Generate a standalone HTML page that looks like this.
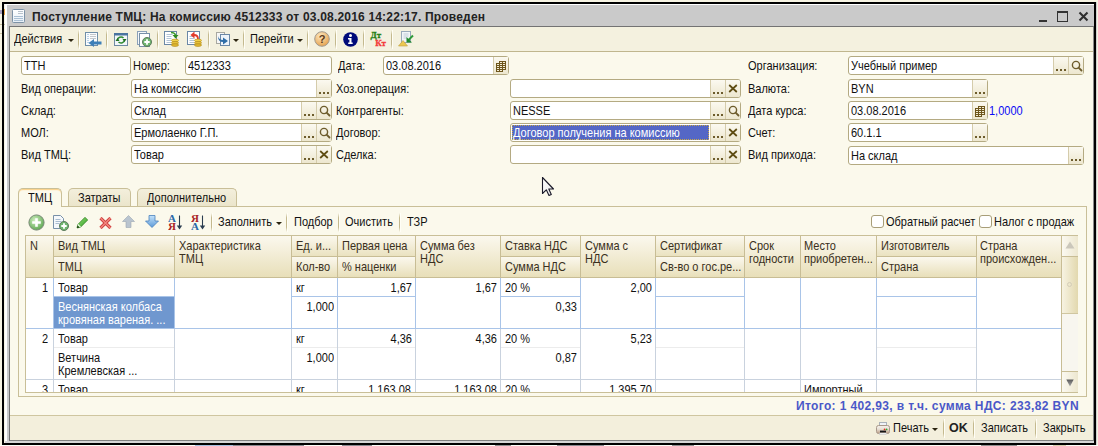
<!DOCTYPE html>
<html><head><meta charset="utf-8">
<style>
*{margin:0;padding:0;box-sizing:border-box}
html,body{width:1098px;height:446px;overflow:hidden;background:#f6f3e2;position:relative;font-family:"Liberation Sans",sans-serif}
.a{position:absolute}
.t{position:absolute;font-size:11px;line-height:13px;white-space:nowrap;color:#111;transform:scaleY(1.125);transform-origin:0 9.5px}
.f{position:absolute;border:1px solid #b4aa82;border-radius:3px;background:#fff}
.bt{position:absolute;top:0;bottom:0;width:15px;border-left:1px solid #d5ccab;background:linear-gradient(#fbf9f0,#ede7cf)}
.bt:last-of-type{border-radius:0 2px 2px 0}
.dots{position:absolute;left:2px;top:12px;width:10px;height:2px;background:linear-gradient(90deg,#6d5c2c 2px,transparent 2px,transparent 4px,#6d5c2c 4px,#6d5c2c 6px,transparent 6px,transparent 8px,#6d5c2c 8px)}
.sep{position:absolute;width:1px;background:linear-gradient(rgba(200,190,150,0),#c4b98e 25%,#c4b98e 75%,rgba(200,190,150,0));box-shadow:1px 0 0 #fffef6}
.hd{position:absolute;background:linear-gradient(#f9f6e8,#ebe3c4)}
.tb{position:absolute;font-size:11px;line-height:13px;white-space:nowrap;color:#222}
.arr{position:absolute;width:0;height:0;border-left:3px solid transparent;border-right:3px solid transparent;border-top:3px solid #2b2410}
</style></head><body>

<div class="a" style="left:5px;top:4px;width:1089px;height:439px;background:#cacaca"></div>
<div class="a" style="left:5px;top:4px;width:1089px;height:1px;background:#fff"></div>
<div class="a" style="left:5px;top:4px;width:2px;height:439px;background:#fff"></div>
<div class="a" style="left:5px;top:441px;width:1089px;height:2px;background:#d6d6d6"></div>
<div class="a" style="left:2px;top:2px;width:1094px;height:443px;border:2px solid #000"></div>
<div class="a" style="left:1096px;top:2px;width:1px;height:443px;background:#d0d0d0"></div>
<div class="a" style="left:0px;top:445px;width:1098px;height:1px;background:#fdfdf8"></div>
<div class="a" style="left:195px;top:445px;width:38px;height:1px;background:#a8c0e0"></div>
<div class="a" style="left:233px;top:445px;width:71px;height:1px;background:#8a8a90"></div>
<div class="a" style="left:342px;top:445px;width:30px;height:1px;background:#8a8a90"></div>
<div class="a" style="left:495px;top:445px;width:16px;height:1px;background:#909090"></div>
<div class="a" style="left:557px;top:445px;width:47px;height:1px;background:#8a8a90"></div>
<div class="a" style="left:672px;top:445px;width:22px;height:1px;background:#909090"></div>
<div class="a" style="left:981px;top:445px;width:36px;height:1px;background:#909090"></div>
<div class="a" style="left:1053px;top:445px;width:13px;height:1px;background:#d8d0b0"></div>
<svg class="a" style="left:12px;top:9px" width="13" height="14" viewBox="0 0 13 14"><defs><linearGradient id="tg" x1="0" y1="0" x2="0" y2="1"><stop offset="0" stop-color="#fff"/><stop offset="1" stop-color="#e6eef6"/></linearGradient></defs><rect x="0.5" y="0.5" width="12" height="13" rx="1" fill="url(#tg)" stroke="#7d92a6"/><path d="M6 2.5h5M6 4.5h5" stroke="#b8c2cc"/><path d="M2 7.5h9M2 9.5h9M2 11.5h9" stroke="#aac0d4"/></svg>
<div class="a" style="left:0px;top:24px;width:2px;height:1px;background:#c8c0a0"></div>
<div class="a" style="left:4px;top:24px;width:1px;height:1px;background:#c8c0a0"></div>
<div class="a" style="left:0px;top:33px;width:2px;height:1px;background:#d0c8a8"></div>
<svg class="a" style="left:0px;top:8px" width="6" height="8" viewBox="0 0 6 8"><path d="M0 3h2M0 5h2" stroke="#6050a0" stroke-width="1"/><path d="M4.5 1v6" stroke="#e8a040" stroke-width="1"/></svg>
<div class="t" style="left:32px;top:10px;font-weight:bold;font-size:12px;letter-spacing:0.19px;line-height:15px;color:#222;transform:none">Поступление ТМЦ: На комиссию 4512333 от 03.08.2016 14:22:17. Проведен</div>
<div class="a" style="left:1039px;top:20px;width:8px;height:2px;background:#333"></div>
<div class="a" style="left:1057px;top:11px;width:11px;height:11px;border:1px solid #333;border-top-width:2px"></div>
<svg class="a" style="left:1078px;top:11px" width="11" height="11" viewBox="0 0 11 11"><path d="M1.5 1.5L9.5 9.5M9.5 1.5L1.5 9.5" stroke="#2e2e2e" stroke-width="2.1"/></svg>
<div class="a" style="left:9px;top:26px;width:1085px;height:415px;border-left:1px solid #737373;border-top:1px solid #737373;border-bottom:1px solid #808080;border-right:1px solid #8a8a8a;background:#fbf9ec"></div>
<div class="a" style="left:10px;top:27px;width:1083px;height:25px;background:#f4f1df;border-bottom:1px solid #c0b68e"></div>
<div class="t" style="left:14px;top:33px;">Действия</div>
<div class="arr" style="left:68px;top:39px"></div>
<div class="sep" style="left:78px;top:30px;height:19px"></div>
<div class="sep" style="left:106px;top:30px;height:19px"></div>
<div class="sep" style="left:157px;top:30px;height:19px"></div>
<div class="sep" style="left:208px;top:30px;height:19px"></div>
<div class="sep" style="left:243px;top:30px;height:19px"></div>
<div class="sep" style="left:307px;top:30px;height:19px"></div>
<div class="sep" style="left:335px;top:30px;height:19px"></div>
<div class="sep" style="left:363px;top:30px;height:19px"></div>
<div class="sep" style="left:391px;top:30px;height:19px"></div>
<svg class="a" style="left:85px;top:32px" width="17" height="15" viewBox="0 0 17 15"><rect x="0.5" y="0.5" width="12" height="13" fill="#fafcfe" stroke="#6f8ea8"/><path d="M2.5 2.5h1M2.5 4.5h1M2.5 6.5h1M2.5 8.5h1M2.5 10.5h1" stroke="#7aa6d0"/><path d="M5 2.5h6M5 4.5h6M5 6.5h6" stroke="#c4c8cc"/><path d="M3.5 11L9 7V9.6H16.5V12.4H9V15z" fill="#3d7fb8"/></svg>
<svg class="a" style="left:114px;top:33px" width="14" height="13" viewBox="0 0 14 13"><rect x="0.5" y="0.5" width="13" height="12" fill="#f2f6fa" stroke="#6f8aa2"/><rect x="0" y="0" width="14" height="2.5" fill="#4a74a0"/><path d="M3.5 7a3.5 3 0 0 1 6-2" stroke="#2f8a2f" stroke-width="1.5" fill="none"/><path d="M10.5 7a3.5 3 0 0 1-6 2" stroke="#2f8a2f" stroke-width="1.5" fill="none"/><path d="M1.5 8h4L3.5 5z" fill="#1e6e1e"/><path d="M8.5 6h4L10.5 9z" fill="#1e6e1e"/></svg>
<svg class="a" style="left:137px;top:31px" width="15" height="16" viewBox="0 0 15 16"><rect x="0.5" y="0.5" width="9" height="13" fill="#f4f7fb" stroke="#8aa0b8"/><rect x="2.5" y="2.5" width="10" height="13" fill="#fff" stroke="#7890a8"/><circle cx="10" cy="11" r="4.5" fill="#6fb56f" stroke="#5d7a5d"/><path d="M10 8.3v5.4M7.3 11h5.4" stroke="#fff" stroke-width="1.8"/></svg>
<svg class="a" style="left:164px;top:31px" width="15" height="16" viewBox="0 0 15 16"><rect x="0.5" y="0.5" width="12" height="13" fill="#fff" stroke="#6b88a6"/><path d="M2.5 3.5h6M2.5 5.5h5M2.5 7.5h5M2.5 9.5h5M2.5 11.5h5" stroke="#b2c4d6"/><path d="M7 1.5q4 0 4.5 3" stroke="#3d9a2d" stroke-width="1.6" fill="none"/><path d="M8.5 4h6l-3 3.5z" fill="#2e8a1e"/><ellipse cx="11" cy="9.5" rx="3.6" ry="1.4" fill="#f2d24a" stroke="#b08a1a" stroke-width="0.6"/><ellipse cx="11" cy="11.8" rx="3.6" ry="1.4" fill="#e8c23a" stroke="#b08a1a" stroke-width="0.6"/><ellipse cx="11" cy="14.1" rx="3.6" ry="1.4" fill="#ddb52e" stroke="#b08a1a" stroke-width="0.6"/></svg>
<svg class="a" style="left:187px;top:31px" width="15" height="16" viewBox="0 0 15 16"><rect x="0.5" y="0.5" width="12" height="13" fill="#fff" stroke="#6b88a6"/><path d="M2.5 5.5h4M2.5 7.5h5M2.5 9.5h5M2.5 11.5h5" stroke="#b2c4d6"/><path d="M11 8q0-4-4-4" stroke="#e23a2a" stroke-width="1.8" fill="none"/><path d="M7.5 0.5v7l-4-3.5z" fill="#e23a2a"/><ellipse cx="11" cy="9.5" rx="3.6" ry="1.4" fill="#f2d24a" stroke="#b08a1a" stroke-width="0.6"/><ellipse cx="11" cy="11.8" rx="3.6" ry="1.4" fill="#e8c23a" stroke="#b08a1a" stroke-width="0.6"/><ellipse cx="11" cy="14.1" rx="3.6" ry="1.4" fill="#ddb52e" stroke="#b08a1a" stroke-width="0.6"/></svg>
<svg class="a" style="left:216px;top:32px" width="15" height="14" viewBox="0 0 15 14"><rect x="0.5" y="0.5" width="8" height="11" fill="#f6f6f6" stroke="#a8a8a0"/><rect x="4.5" y="2.5" width="9" height="11" fill="#eef4fa" stroke="#6b88a6"/><path d="M2 4q1 4 5 4V5.5l5 3.5-5 3.5V10q-5 0-5-6z" fill="#2f6ea8"/></svg>
<div class="arr" style="left:233px;top:39px"></div>
<div class="t" style="left:250px;top:33px;">Перейти</div>
<div class="arr" style="left:297px;top:39px"></div>
<svg class="a" style="left:314px;top:31px" width="16" height="16" viewBox="0 0 16 16"><defs><radialGradient id="hg" cx="0.4" cy="0.3" r="0.8"><stop offset="0" stop-color="#fde8c0"/><stop offset="1" stop-color="#e39a42"/></radialGradient></defs><circle cx="8" cy="8" r="7.3" fill="url(#hg)" stroke="#a09a90"/><text x="8" y="12" text-anchor="middle" font-family="Liberation Sans" font-weight="bold" font-size="11" fill="#5a3a1a">?</text></svg>
<svg class="a" style="left:343px;top:32px" width="15" height="15" viewBox="0 0 15 15"><circle cx="7.5" cy="7.5" r="7.3" fill="#000a7a"/><circle cx="7.5" cy="3.6" r="1.5" fill="#fff"/><path d="M5 6h3.5v4.5h1.2v1.6H5.2v-1.6h1.2V7.5H5z" fill="#fff"/></svg>
<svg class="a" style="left:369px;top:30px" width="18" height="18" viewBox="0 0 18 18"><text x="1.5" y="8.3" font-family="Liberation Serif" font-weight="bold" font-size="9" fill="#1f7d12" stroke="#1f7d12" stroke-width="0.3">Дт</text><text x="6.3" y="16" font-family="Liberation Serif" font-weight="bold" font-size="9" fill="#f23a3a" stroke="#f23a3a" stroke-width="0.3">Кт</text></svg>
<svg class="a" style="left:398px;top:31px" width="16" height="16" viewBox="0 0 16 16"><rect x="3.5" y="0.5" width="9" height="11" fill="#f2f5f8" stroke="#9aaabb"/><path d="M5.5 3h5M5.5 5h5M5.5 7h4" stroke="#c0ccd8"/><path d="M0.5 15L5 9.5L9.5 15z" fill="#ecc850" stroke="#c0a040" stroke-width="0.6"/><path d="M15 4.5L10 9.5" stroke="#2e9a3a" stroke-width="2"/><path d="M8.5 6v5.5H14z" fill="#1f8a2a"/></svg>
<div class="f" style="left:21px;top:56px;width:110px;height:19px"><div class="t" style="left:2px;top:3px;color:#111;">ТТН</div></div>
<div class="t" style="left:133px;top:60px;">Номер:</div>
<div class="f" style="left:185px;top:56px;width:147px;height:19px"><div class="t" style="left:2px;top:3px;color:#111;">4512333</div></div>
<div class="t" style="left:338px;top:60px;">Дата:</div>
<div class="f" style="left:383px;top:56px;width:126px;height:19px"><div class="bt" style="right:0px"><svg class="a" style="left:2px;top:4px" width="11" height="11" viewBox="0 0 11 11" shape-rendering="crispEdges"><path d="M3 0H10V9H7V11H0V2H3Z" fill="#6e561c"/><g fill="#f4eed6"><rect x="4" y="1" width="2" height="1"/><rect x="7" y="1" width="2" height="1"/><rect x="1" y="3" width="2" height="1"/><rect x="4" y="3" width="2" height="1"/><rect x="7" y="3" width="2" height="1"/><rect x="1" y="5" width="2" height="1"/><rect x="4" y="5" width="2" height="1"/><rect x="7" y="5" width="2" height="1"/><rect x="1" y="7" width="2" height="1"/><rect x="4" y="7" width="2" height="1"/><rect x="7" y="7" width="2" height="1"/><rect x="1" y="9" width="2" height="1"/><rect x="4" y="9" width="2" height="1"/></g></svg></div><div class="t" style="left:2px;top:3px;color:#111;">03.08.2016</div></div>
<div class="t" style="left:748px;top:60px;">Организация:</div>
<div class="f" style="left:848px;top:56px;width:236px;height:19px"><div class="bt" style="right:15px"><div class="dots"></div></div><div class="bt" style="right:0px"><svg class="a" style="left:2px;top:3px" width="12" height="12" viewBox="0 0 12 12"><circle cx="5" cy="5" r="3.6" fill="none" stroke="#6d5c2c" stroke-width="1.4"/><path d="M7.6 7.6L10.5 10.5" stroke="#6d5c2c" stroke-width="1.8" stroke-linecap="round"/></svg></div><div class="t" style="left:2px;top:3px;color:#111;">Учебный пример</div></div>
<div class="t" style="left:21px;top:83px;">Вид операции:</div>
<div class="t" style="left:21px;top:105px;">Склад:</div>
<div class="t" style="left:21px;top:127px;">МОЛ:</div>
<div class="t" style="left:21px;top:149px;">Вид ТМЦ:</div>
<div class="f" style="left:131px;top:79px;width:201px;height:19px"><div class="bt" style="right:0px"><div class="dots"></div></div><div class="t" style="left:2px;top:3px;color:#111;">На комиссию</div></div>
<div class="f" style="left:131px;top:101px;width:201px;height:19px"><div class="bt" style="right:15px"><div class="dots"></div></div><div class="bt" style="right:0px"><svg class="a" style="left:2px;top:3px" width="12" height="12" viewBox="0 0 12 12"><circle cx="5" cy="5" r="3.6" fill="none" stroke="#6d5c2c" stroke-width="1.4"/><path d="M7.6 7.6L10.5 10.5" stroke="#6d5c2c" stroke-width="1.8" stroke-linecap="round"/></svg></div><div class="t" style="left:2px;top:3px;color:#111;">Склад</div></div>
<div class="f" style="left:131px;top:123px;width:201px;height:19px"><div class="bt" style="right:15px"><div class="dots"></div></div><div class="bt" style="right:0px"><svg class="a" style="left:2px;top:3px" width="12" height="12" viewBox="0 0 12 12"><circle cx="5" cy="5" r="3.6" fill="none" stroke="#6d5c2c" stroke-width="1.4"/><path d="M7.6 7.6L10.5 10.5" stroke="#6d5c2c" stroke-width="1.8" stroke-linecap="round"/></svg></div><div class="t" style="left:2px;top:3px;color:#111;">Ермолаенко Г.П.</div></div>
<div class="f" style="left:131px;top:145px;width:201px;height:19px"><div class="bt" style="right:15px"><div class="dots"></div></div><div class="bt" style="right:0px"><svg class="a" style="left:2px;top:4px" width="10" height="9" viewBox="0 0 10 9"><path d="M1.2 1L8.8 8M8.8 1L1.2 8" stroke="#5e4c12" stroke-width="1.7"/></svg></div><div class="t" style="left:2px;top:3px;color:#111;">Товар</div></div>
<div class="t" style="left:336px;top:83px;">Хоз.операция:</div>
<div class="t" style="left:336px;top:105px;">Контрагенты:</div>
<div class="t" style="left:336px;top:127px;">Договор:</div>
<div class="t" style="left:336px;top:149px;">Сделка:</div>
<div class="f" style="left:510px;top:79px;width:231px;height:19px"><div class="bt" style="right:15px"><div class="dots"></div></div><div class="bt" style="right:0px"><svg class="a" style="left:2px;top:4px" width="10" height="9" viewBox="0 0 10 9"><path d="M1.2 1L8.8 8M8.8 1L1.2 8" stroke="#5e4c12" stroke-width="1.7"/></svg></div></div>
<div class="f" style="left:510px;top:101px;width:231px;height:19px"><div class="bt" style="right:15px"><div class="dots"></div></div><div class="bt" style="right:0px"><svg class="a" style="left:2px;top:3px" width="12" height="12" viewBox="0 0 12 12"><circle cx="5" cy="5" r="3.6" fill="none" stroke="#6d5c2c" stroke-width="1.4"/><path d="M7.6 7.6L10.5 10.5" stroke="#6d5c2c" stroke-width="1.8" stroke-linecap="round"/></svg></div><div class="t" style="left:2px;top:3px;color:#111;">NESSE</div></div>
<div class="f" style="left:510px;top:123px;width:231px;height:19px"><div class="a" style="left:1px;top:1px;width:197px;height:15px;background:#5467c6;border:1px dotted #c9a94a"></div><div class="bt" style="right:15px"><div class="dots"></div></div><div class="bt" style="right:0px"><svg class="a" style="left:2px;top:4px" width="10" height="9" viewBox="0 0 10 9"><path d="M1.2 1L8.8 8M8.8 1L1.2 8" stroke="#5e4c12" stroke-width="1.7"/></svg></div><div class="t" style="left:2px;top:3px;color:#fff;">Договор получения на комиссию</div></div>
<div class="f" style="left:510px;top:145px;width:231px;height:19px"><div class="bt" style="right:15px"><div class="dots"></div></div><div class="bt" style="right:0px"><svg class="a" style="left:2px;top:4px" width="10" height="9" viewBox="0 0 10 9"><path d="M1.2 1L8.8 8M8.8 1L1.2 8" stroke="#5e4c12" stroke-width="1.7"/></svg></div></div>
<div class="t" style="left:748px;top:83px;">Валюта:</div>
<div class="t" style="left:748px;top:105px;">Дата курса:</div>
<div class="t" style="left:748px;top:127px;">Счет:</div>
<div class="t" style="left:748px;top:149px;">Вид прихода:</div>
<div class="f" style="left:848px;top:79px;width:140px;height:19px"><div class="bt" style="right:0px"><div class="dots"></div></div><div class="t" style="left:2px;top:3px;color:#111;">BYN</div></div>
<div class="f" style="left:848px;top:101px;width:140px;height:19px"><div class="bt" style="right:0px"><svg class="a" style="left:2px;top:4px" width="11" height="11" viewBox="0 0 11 11" shape-rendering="crispEdges"><path d="M3 0H10V9H7V11H0V2H3Z" fill="#6e561c"/><g fill="#f4eed6"><rect x="4" y="1" width="2" height="1"/><rect x="7" y="1" width="2" height="1"/><rect x="1" y="3" width="2" height="1"/><rect x="4" y="3" width="2" height="1"/><rect x="7" y="3" width="2" height="1"/><rect x="1" y="5" width="2" height="1"/><rect x="4" y="5" width="2" height="1"/><rect x="7" y="5" width="2" height="1"/><rect x="1" y="7" width="2" height="1"/><rect x="4" y="7" width="2" height="1"/><rect x="7" y="7" width="2" height="1"/><rect x="1" y="9" width="2" height="1"/><rect x="4" y="9" width="2" height="1"/></g></svg></div><div class="t" style="left:2px;top:3px;color:#111;">03.08.2016</div></div>
<div class="t" style="left:989px;top:105px;color:#0a0af5">1,0000</div>
<div class="f" style="left:848px;top:123px;width:140px;height:19px"><div class="bt" style="right:0px"><div class="dots"></div></div><div class="t" style="left:2px;top:3px;color:#111;">60.1.1</div></div>
<div class="f" style="left:848px;top:146px;width:236px;height:19px"><div class="bt" style="right:0px"><div class="dots"></div></div><div class="t" style="left:2px;top:3px;color:#111;">На склад</div></div>
<div class="a" style="left:18px;top:206px;width:1069px;height:191px;border:1px solid #c9bf98;background:#fbf9ec"></div>
<div class="a" style="left:68px;top:188px;width:63px;height:18px;border:1px solid #c9bf98;border-bottom:none;border-radius:5px 5px 0 0;background:linear-gradient(#f3efdc,#ebe5cb)"></div>
<div class="t" style="left:78px;top:192px;">Затраты</div>
<div class="a" style="left:137px;top:188px;width:100px;height:18px;border:1px solid #c9bf98;border-bottom:none;border-radius:5px 5px 0 0;background:linear-gradient(#f3efdc,#ebe5cb)"></div>
<div class="t" style="left:147px;top:192px;">Дополнительно</div>
<div class="a" style="left:18px;top:188px;width:44px;height:19px;border:1px solid #c9bf98;border-bottom:none;border-radius:5px 5px 0 0;background:#fbf9ec;box-shadow:inset 0 1px 0 #fbd48e,inset 0 2px 0 #fdf3dc"></div>
<div class="t" style="left:28px;top:192px;">ТМЦ</div>
<svg class="a" style="left:28px;top:214px" width="17" height="17" viewBox="0 0 17 17"><defs><radialGradient id="gp" cx="0.4" cy="0.35" r="0.7"><stop offset="0" stop-color="#d0f0c0"/><stop offset="1" stop-color="#5aa44e"/></radialGradient></defs><circle cx="8.5" cy="8.5" r="7.6" fill="url(#gp)" stroke="#7a8a78"/><path d="M8.5 4.2v8.6M4.2 8.5h8.6" stroke="#fff" stroke-width="2.6"/></svg>
<svg class="a" style="left:53px;top:215px" width="16" height="16" viewBox="0 0 16 16"><path d="M0.5 0.5h7l3 3v10h-10z" fill="#f5f8fb" stroke="#7890a8"/><path d="M2.5 4.5h5M2.5 6.5h6M2.5 8.5h4" stroke="#a8bcd0"/><circle cx="11" cy="11" r="4.5" fill="#6fb56f" stroke="#5d7a5d"/><path d="M11 8.3v5.4M8.3 11h5.4" stroke="#fff" stroke-width="1.8"/></svg>
<svg class="a" style="left:76px;top:216px" width="13" height="13" viewBox="0 0 13 13"><defs><linearGradient id="pc" x1="0" y1="0" x2="1" y2="1"><stop offset="0" stop-color="#9ae27a"/><stop offset="1" stop-color="#2a9a1e"/></linearGradient></defs><path d="M1 12l0.8-3.5L9 1.3l2.7 2.7-7.2 7.2z" fill="url(#pc)" stroke="#2a7a1c" stroke-width="0.7"/><path d="M1.8 8.5l2.7 2.7" stroke="#f4f8ee" stroke-width="1.2"/><path d="M1 12l0.6-2.4 1.8 1.8z" fill="#1e3a10"/></svg>
<svg class="a" style="left:99px;top:217px" width="13" height="12" viewBox="0 0 13 12"><path d="M1.5 1L11.5 11M11.5 1L1.5 11" stroke="#d04040" stroke-width="3.2"/><path d="M1.5 1L11.5 11M11.5 1L1.5 11" stroke="#f28a80" stroke-width="1.2"/></svg>
<svg class="a" style="left:122px;top:215px" width="13" height="13" viewBox="0 0 13 13"><path d="M6.5 0.5L12.5 6.5H9V12.5H4V6.5H0.5z" fill="#b9c4cf" stroke="#9aa6b2" stroke-width="0.6"/></svg>
<svg class="a" style="left:145px;top:215px" width="14" height="13" viewBox="0 0 14 13"><defs><linearGradient id="da" x1="0" y1="0" x2="0" y2="1"><stop offset="0" stop-color="#c4e2fa"/><stop offset="1" stop-color="#5c9ad8"/></linearGradient></defs><path d="M7 12.5L13.5 6H10V0.5H4V6H0.5z" fill="url(#da)" stroke="#4a82bc" stroke-width="0.8"/></svg>
<svg class="a" style="left:168px;top:213px" width="16" height="18" viewBox="0 0 16 18"><text x="4" y="8.8" text-anchor="middle" font-family="Liberation Serif" font-weight="bold" font-size="11" fill="#2a68a8">A</text><text x="4" y="16.8" text-anchor="middle" font-family="Liberation Serif" font-weight="bold" font-size="11" fill="#a82424">Я</text><path d="M11.5 2.5v11" stroke="#2a3c50" stroke-width="1.1"/><path d="M8.8 12.5h5.4l-2.7 4z" fill="#2a3c50"/></svg>
<svg class="a" style="left:191px;top:213px" width="16" height="18" viewBox="0 0 16 18"><text x="4" y="8.8" text-anchor="middle" font-family="Liberation Serif" font-weight="bold" font-size="11" fill="#a82424">Я</text><text x="4" y="16.8" text-anchor="middle" font-family="Liberation Serif" font-weight="bold" font-size="11" fill="#2a68a8">A</text><path d="M11.5 2.5v11" stroke="#2a3c50" stroke-width="1.1"/><path d="M8.8 12.5h5.4l-2.7 4z" fill="#2a3c50"/></svg>
<div class="sep" style="left:211px;top:213px;height:19px"></div>
<div class="sep" style="left:286px;top:213px;height:19px"></div>
<div class="sep" style="left:338px;top:213px;height:19px"></div>
<div class="sep" style="left:399px;top:213px;height:19px"></div>
<div class="t" style="left:218px;top:216px;">Заполнить</div>
<div class="arr" style="left:276px;top:222px"></div>
<div class="t" style="left:294px;top:216px;">Подбор</div>
<div class="t" style="left:345px;top:216px;">Очистить</div>
<div class="t" style="left:407px;top:216px;">ТЗР</div>
<div class="a" style="left:871px;top:215px;width:13px;height:13px;border:1px solid #a89e78;border-radius:3px;background:#fff"></div>
<div class="t" style="left:886px;top:216px;">Обратный расчет</div>
<div class="a" style="left:979px;top:215px;width:13px;height:13px;border:1px solid #a89e78;border-radius:3px;background:#fff"></div>
<div class="t" style="left:994px;top:216px;">Налог с продаж</div>
<div class="a" style="left:25px;top:235px;width:1053px;height:158px;border:1px solid #c9bf98;background:#fff"></div>
<div class="a" style="left:26px;top:236px;width:27px;height:41px;background:linear-gradient(#fbf8ee,#e8dfb9)"></div>
<div class="a" style="left:53px;top:236px;width:1px;height:41px;background:#c8bd95"></div>
<div class="a" style="left:54px;top:236px;width:120px;height:20px;background:linear-gradient(#fbf8ee,#eae2c0)"></div>
<div class="a" style="left:54px;top:256px;width:120px;height:1px;background:#c8bd95"></div>
<div class="a" style="left:54px;top:257px;width:120px;height:20px;background:linear-gradient(#fbf8ee,#e8dfb9)"></div>
<div class="a" style="left:174px;top:236px;width:1px;height:41px;background:#c8bd95"></div>
<div class="a" style="left:175px;top:236px;width:116px;height:41px;background:linear-gradient(#fbf8ee,#e8dfb9)"></div>
<div class="a" style="left:291px;top:236px;width:1px;height:41px;background:#c8bd95"></div>
<div class="a" style="left:292px;top:236px;width:45px;height:20px;background:linear-gradient(#fbf8ee,#eae2c0)"></div>
<div class="a" style="left:292px;top:256px;width:45px;height:1px;background:#c8bd95"></div>
<div class="a" style="left:292px;top:257px;width:45px;height:20px;background:linear-gradient(#fbf8ee,#e8dfb9)"></div>
<div class="a" style="left:337px;top:236px;width:1px;height:41px;background:#c8bd95"></div>
<div class="a" style="left:338px;top:236px;width:77px;height:20px;background:linear-gradient(#fbf8ee,#eae2c0)"></div>
<div class="a" style="left:338px;top:256px;width:77px;height:1px;background:#c8bd95"></div>
<div class="a" style="left:338px;top:257px;width:77px;height:20px;background:linear-gradient(#fbf8ee,#e8dfb9)"></div>
<div class="a" style="left:415px;top:236px;width:1px;height:41px;background:#c8bd95"></div>
<div class="a" style="left:416px;top:236px;width:84px;height:41px;background:linear-gradient(#fbf8ee,#e8dfb9)"></div>
<div class="a" style="left:500px;top:236px;width:1px;height:41px;background:#c8bd95"></div>
<div class="a" style="left:501px;top:236px;width:79px;height:20px;background:linear-gradient(#fbf8ee,#eae2c0)"></div>
<div class="a" style="left:501px;top:256px;width:79px;height:1px;background:#c8bd95"></div>
<div class="a" style="left:501px;top:257px;width:79px;height:20px;background:linear-gradient(#fbf8ee,#e8dfb9)"></div>
<div class="a" style="left:580px;top:236px;width:1px;height:41px;background:#c8bd95"></div>
<div class="a" style="left:581px;top:236px;width:74px;height:41px;background:linear-gradient(#fbf8ee,#e8dfb9)"></div>
<div class="a" style="left:655px;top:236px;width:1px;height:41px;background:#c8bd95"></div>
<div class="a" style="left:656px;top:236px;width:88px;height:20px;background:linear-gradient(#fbf8ee,#eae2c0)"></div>
<div class="a" style="left:656px;top:256px;width:88px;height:1px;background:#c8bd95"></div>
<div class="a" style="left:656px;top:257px;width:88px;height:20px;background:linear-gradient(#fbf8ee,#e8dfb9)"></div>
<div class="a" style="left:744px;top:236px;width:1px;height:41px;background:#c8bd95"></div>
<div class="a" style="left:745px;top:236px;width:55px;height:41px;background:linear-gradient(#fbf8ee,#e8dfb9)"></div>
<div class="a" style="left:800px;top:236px;width:1px;height:41px;background:#c8bd95"></div>
<div class="a" style="left:801px;top:236px;width:75px;height:41px;background:linear-gradient(#fbf8ee,#e8dfb9)"></div>
<div class="a" style="left:876px;top:236px;width:1px;height:41px;background:#c8bd95"></div>
<div class="a" style="left:877px;top:236px;width:99px;height:20px;background:linear-gradient(#fbf8ee,#eae2c0)"></div>
<div class="a" style="left:877px;top:256px;width:99px;height:1px;background:#c8bd95"></div>
<div class="a" style="left:877px;top:257px;width:99px;height:20px;background:linear-gradient(#fbf8ee,#e8dfb9)"></div>
<div class="a" style="left:976px;top:236px;width:1px;height:41px;background:#c8bd95"></div>
<div class="a" style="left:977px;top:236px;width:84px;height:41px;background:linear-gradient(#fbf8ee,#e8dfb9)"></div>
<div class="a" style="left:1061px;top:236px;width:1px;height:41px;background:#c8bd95"></div>
<div class="a" style="left:26px;top:277px;width:1035px;height:1px;background:#c8bd95"></div>
<div class="t" style="left:30px;top:240px;color:#3a3020">N</div>
<div class="t" style="left:58px;top:240px;color:#3a3020">Вид ТМЦ</div>
<div class="t" style="left:58px;top:261px;color:#3a3020">ТМЦ</div>
<div class="t" style="left:179px;top:240px;color:#3a3020">Характеристика</div>
<div class="t" style="left:179px;top:253px;color:#3a3020">ТМЦ</div>
<div class="t" style="left:296px;top:240px;color:#3a3020">Ед. и...</div>
<div class="t" style="left:296px;top:261px;color:#3a3020">Кол-во</div>
<div class="t" style="left:342px;top:240px;color:#3a3020">Первая цена</div>
<div class="t" style="left:342px;top:261px;color:#3a3020">% наценки</div>
<div class="t" style="left:420px;top:240px;color:#3a3020">Сумма без</div>
<div class="t" style="left:420px;top:253px;color:#3a3020">НДС</div>
<div class="t" style="left:505px;top:240px;color:#3a3020">Ставка НДС</div>
<div class="t" style="left:505px;top:261px;color:#3a3020">Сумма НДС</div>
<div class="t" style="left:585px;top:240px;color:#3a3020">Сумма с</div>
<div class="t" style="left:585px;top:253px;color:#3a3020">НДС</div>
<div class="t" style="left:660px;top:240px;color:#3a3020">Сертификат</div>
<div class="t" style="left:660px;top:261px;color:#3a3020">Св-во о гос.ре...</div>
<div class="t" style="left:749px;top:240px;color:#3a3020">Срок</div>
<div class="t" style="left:749px;top:253px;color:#3a3020">годности</div>
<div class="t" style="left:804px;top:240px;color:#3a3020">Место</div>
<div class="t" style="left:804px;top:253px;color:#3a3020">приобретен...</div>
<div class="t" style="left:881px;top:240px;color:#3a3020">Изготовитель</div>
<div class="t" style="left:881px;top:261px;color:#3a3020">Страна</div>
<div class="t" style="left:980px;top:240px;color:#3a3020">Страна</div>
<div class="t" style="left:980px;top:253px;color:#3a3020">происхожден...</div>
<div class="a" style="left:53px;top:278px;width:1px;height:50px;background:#a9c4e8"></div>
<div class="a" style="left:174px;top:278px;width:1px;height:50px;background:#a9c4e8"></div>
<div class="a" style="left:291px;top:278px;width:1px;height:50px;background:#a9c4e8"></div>
<div class="a" style="left:337px;top:278px;width:1px;height:50px;background:#a9c4e8"></div>
<div class="a" style="left:415px;top:278px;width:1px;height:50px;background:#a9c4e8"></div>
<div class="a" style="left:500px;top:278px;width:1px;height:50px;background:#a9c4e8"></div>
<div class="a" style="left:580px;top:278px;width:1px;height:50px;background:#a9c4e8"></div>
<div class="a" style="left:655px;top:278px;width:1px;height:50px;background:#a9c4e8"></div>
<div class="a" style="left:744px;top:278px;width:1px;height:50px;background:#a9c4e8"></div>
<div class="a" style="left:800px;top:278px;width:1px;height:50px;background:#a9c4e8"></div>
<div class="a" style="left:876px;top:278px;width:1px;height:50px;background:#a9c4e8"></div>
<div class="a" style="left:976px;top:278px;width:1px;height:50px;background:#a9c4e8"></div>
<div class="a" style="left:26px;top:328px;width:1035px;height:1px;background:#a9c4e8"></div>
<div class="a" style="left:54px;top:296px;width:120px;height:1px;background:#a9c4e8"></div>
<div class="a" style="left:292px;top:296px;width:45px;height:1px;background:#a9c4e8"></div>
<div class="a" style="left:338px;top:296px;width:77px;height:1px;background:#a9c4e8"></div>
<div class="a" style="left:501px;top:296px;width:79px;height:1px;background:#a9c4e8"></div>
<div class="a" style="left:656px;top:296px;width:88px;height:1px;background:#a9c4e8"></div>
<div class="a" style="left:877px;top:296px;width:99px;height:1px;background:#a9c4e8"></div>
<div class="a" style="left:54px;top:297px;width:120px;height:31px;background:#6f97cf"></div>
<div class="a" style="left:53px;top:329px;width:1px;height:50px;background:#c9d2de"></div>
<div class="a" style="left:174px;top:329px;width:1px;height:50px;background:#c9d2de"></div>
<div class="a" style="left:291px;top:329px;width:1px;height:50px;background:#c9d2de"></div>
<div class="a" style="left:337px;top:329px;width:1px;height:50px;background:#c9d2de"></div>
<div class="a" style="left:415px;top:329px;width:1px;height:50px;background:#c9d2de"></div>
<div class="a" style="left:500px;top:329px;width:1px;height:50px;background:#c9d2de"></div>
<div class="a" style="left:580px;top:329px;width:1px;height:50px;background:#c9d2de"></div>
<div class="a" style="left:655px;top:329px;width:1px;height:50px;background:#c9d2de"></div>
<div class="a" style="left:744px;top:329px;width:1px;height:50px;background:#c9d2de"></div>
<div class="a" style="left:800px;top:329px;width:1px;height:50px;background:#c9d2de"></div>
<div class="a" style="left:876px;top:329px;width:1px;height:50px;background:#c9d2de"></div>
<div class="a" style="left:976px;top:329px;width:1px;height:50px;background:#c9d2de"></div>
<div class="a" style="left:26px;top:379px;width:1035px;height:1px;background:#c9d2de"></div>
<div class="a" style="left:54px;top:347px;width:120px;height:1px;background:#ececec"></div>
<div class="a" style="left:292px;top:347px;width:45px;height:1px;background:#ececec"></div>
<div class="a" style="left:338px;top:347px;width:77px;height:1px;background:#ececec"></div>
<div class="a" style="left:501px;top:347px;width:79px;height:1px;background:#ececec"></div>
<div class="a" style="left:656px;top:347px;width:88px;height:1px;background:#ececec"></div>
<div class="a" style="left:877px;top:347px;width:99px;height:1px;background:#ececec"></div>
<div class="a" style="left:53px;top:380px;width:1px;height:12px;background:#c9d2de"></div>
<div class="a" style="left:174px;top:380px;width:1px;height:12px;background:#c9d2de"></div>
<div class="a" style="left:291px;top:380px;width:1px;height:12px;background:#c9d2de"></div>
<div class="a" style="left:337px;top:380px;width:1px;height:12px;background:#c9d2de"></div>
<div class="a" style="left:415px;top:380px;width:1px;height:12px;background:#c9d2de"></div>
<div class="a" style="left:500px;top:380px;width:1px;height:12px;background:#c9d2de"></div>
<div class="a" style="left:580px;top:380px;width:1px;height:12px;background:#c9d2de"></div>
<div class="a" style="left:655px;top:380px;width:1px;height:12px;background:#c9d2de"></div>
<div class="a" style="left:744px;top:380px;width:1px;height:12px;background:#c9d2de"></div>
<div class="a" style="left:800px;top:380px;width:1px;height:12px;background:#c9d2de"></div>
<div class="a" style="left:876px;top:380px;width:1px;height:12px;background:#c9d2de"></div>
<div class="a" style="left:976px;top:380px;width:1px;height:12px;background:#c9d2de"></div>
<div class="t" style="right:1050px;top:282px;">1</div>
<div class="t" style="left:58px;top:282px;">Товар</div>
<div class="t" style="left:58px;top:301px;color:#fff">Веснянская колбаса</div>
<div class="t" style="left:58px;top:314px;color:#fff">кровяная вареная. ...</div>
<div class="t" style="left:296px;top:282px;">кг</div>
<div class="t" style="right:764px;top:301px;">1,000</div>
<div class="t" style="right:686px;top:282px;">1,67</div>
<div class="t" style="right:601px;top:282px;">1,67</div>
<div class="t" style="left:505px;top:282px;">20 %</div>
<div class="t" style="right:521px;top:301px;">0,33</div>
<div class="t" style="right:446px;top:282px;">2,00</div>
<div class="t" style="right:1050px;top:333px;">2</div>
<div class="t" style="left:58px;top:333px;">Товар</div>
<div class="t" style="left:58px;top:352px;">Ветчина</div>
<div class="t" style="left:58px;top:365px;">Кремлевская ...</div>
<div class="t" style="left:296px;top:333px;">кг</div>
<div class="t" style="right:764px;top:352px;">1,000</div>
<div class="t" style="right:686px;top:333px;">4,36</div>
<div class="t" style="right:601px;top:333px;">4,36</div>
<div class="t" style="left:505px;top:333px;">20 %</div>
<div class="t" style="right:521px;top:352px;">0,87</div>
<div class="t" style="right:446px;top:333px;">5,23</div>
<div class="a" style="left:26px;top:380px;width:1035px;height:12px;overflow:hidden">
<div class="t" style="right:1013px;top:4px;">3</div>
<div class="t" style="left:32px;top:4px;">Товар</div>
<div class="t" style="left:270px;top:4px;">кг</div>
<div class="t" style="right:650px;top:4px;">1 163,08</div>
<div class="t" style="right:564px;top:4px;">1 163,08</div>
<div class="t" style="left:479px;top:4px;">20 %</div>
<div class="t" style="right:409px;top:4px;">1 395,70</div>
<div class="t" style="left:778px;top:4px;">Импортный</div>
</div>
<div class="a" style="left:1061px;top:236px;width:17px;height:156px;background:#f8f6ef;border-left:1px solid #c8bd95"></div>
<div class="a" style="left:1062px;top:236px;width:16px;height:21px;background:linear-gradient(90deg,#fbf9f1,#ede7cf);border-bottom:1px solid #c8bd95"></div>
<svg class="a" style="left:1065px;top:241px" width="10" height="8" viewBox="0 0 10 8"><path d="M5 0.5L9.5 7.5H0.5z" fill="#cbc7bb"/></svg>
<div class="a" style="left:1062px;top:257px;width:16px;height:57px;background:linear-gradient(90deg,#f7f3e2,#e2d8ae);border-bottom:1px solid #d0c6a0"></div>
<div class="a" style="left:1067px;top:282px;width:5px;height:5px;border-radius:50%;border:1px solid #d4cdb8"></div>
<div class="a" style="left:1062px;top:371px;width:16px;height:21px;background:linear-gradient(90deg,#fbf9f1,#ede7cf);border-top:1px solid #c8bd95"></div>
<svg class="a" style="left:1066px;top:379px" width="8" height="8" viewBox="0 0 8 8"><defs><linearGradient id="dg" x1="0" y1="0" x2="0" y2="1"><stop offset="0" stop-color="#5a5a5a"/><stop offset="1" stop-color="#a8a8a8"/></linearGradient></defs><path d="M0.3 0.5H7.7L4 7.5z" fill="url(#dg)"/></svg>
<div class="t" style="right:19px;top:399px;font-weight:bold;font-size:12px;letter-spacing:0.37px;line-height:15px;color:#4a58c8;transform:none">Итого: 1 402,93, в т.ч. сумма НДС: 233,82 BYN</div>
<div class="a" style="left:10px;top:415px;width:1083px;height:25px;background:#f3efdc;border-top:1px solid #cfc6a0"></div>
<svg class="a" style="left:876px;top:422px" width="14" height="13" viewBox="0 0 14 13"><defs><linearGradient id="pg" x1="0" y1="0" x2="0" y2="1"><stop offset="0" stop-color="#f6f2ec"/><stop offset="0.45" stop-color="#e8e0d6"/><stop offset="1" stop-color="#b89a80"/></linearGradient></defs><rect x="3.5" y="0.5" width="7" height="5" fill="#eef2f6" stroke="#aab2ba"/><rect x="0.5" y="3.5" width="13" height="8" rx="2" fill="url(#pg)" stroke="#a8988a"/><rect x="4" y="8.6" width="6" height="2" fill="#151515"/><rect x="3.5" y="11" width="7" height="1.6" fill="#fff" stroke="#b8b8b8" stroke-width="0.5"/><circle cx="8.6" cy="7.4" r="0.9" fill="#e03020"/><circle cx="10.6" cy="7.4" r="0.9" fill="#30a830"/></svg>
<div class="t" style="left:893px;top:422px;">Печать</div>
<div class="arr" style="left:932px;top:428px"></div>
<div class="sep" style="left:943px;top:419px;height:19px"></div>
<div class="sep" style="left:973px;top:419px;height:19px"></div>
<div class="sep" style="left:1035px;top:419px;height:19px"></div>
<div class="t" style="left:949px;top:421px;font-weight:bold;font-size:12.5px;line-height:15px;color:#222;transform:none">OK</div>
<div class="t" style="left:981px;top:422px;">Записать</div>
<div class="t" style="left:1043px;top:422px;">Закрыть</div>
<svg class="a" style="left:541px;top:176px" width="14" height="21" viewBox="0 0 14 21"><defs><linearGradient id="cg" x1="0" y1="0" x2="1" y2="1"><stop offset="0" stop-color="#fff"/><stop offset="1" stop-color="#e6e6e6"/></linearGradient></defs><path d="M1.5 1.5V17.5L5.3 13.8L8 19.5L10.3 18.5L7.8 13H12.5Z" fill="url(#cg)" stroke="#1a1a2a" stroke-width="1.1" stroke-linejoin="round"/></svg>
</body></html>
